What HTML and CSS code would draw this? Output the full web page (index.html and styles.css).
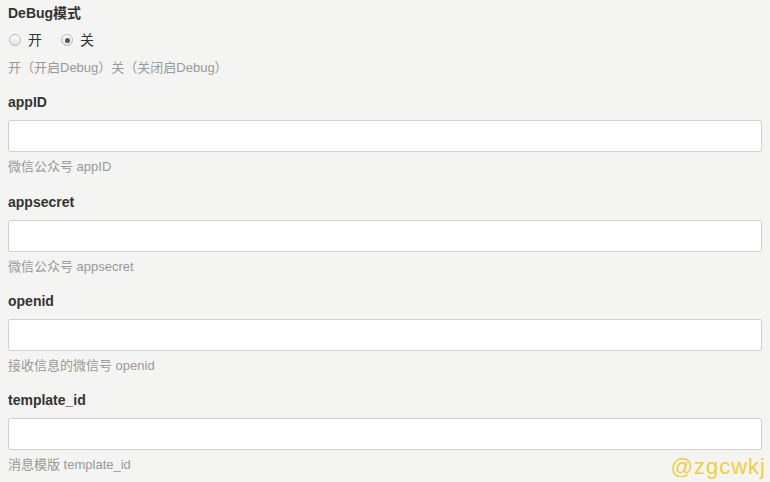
FILE: index.html
```html
<!DOCTYPE html>
<html lang="zh-CN">
<head>
  <meta charset="UTF-8" />
  <title>设置</title>
  <link rel="stylesheet" href="styles.css">
</head>
<body>
  <form class="settings">
    <!-- DeBug -->
    <div class="field field-first">
      <div class="field-label">DeBug模式</div>
      <div class="radio-row">
        <label class="radio"><input type="radio" name="debug" value="1" /> 开</label>
        <label class="radio"><input type="radio" name="debug" value="0" checked /> 关</label>
      </div>
      <p class="help">开（开启Debug）关（关闭启Debug）</p>
    </div>

    <!-- appID -->
    <div class="field">
      <label class="field-label" for="appID">appID</label>
      <input type="text" id="appID" class="text-input" />
      <p class="help">微信公众号 appID</p>
    </div>

    <!-- appsecret -->
    <div class="field">
      <label class="field-label" for="appsecret">appsecret</label>
      <input type="text" id="appsecret" class="text-input" />
      <p class="help">微信公众号 appsecret</p>
    </div>

    <!-- openid -->
    <div class="field">
      <label class="field-label" for="openid">openid</label>
      <input type="text" id="openid" class="text-input" />
      <p class="help">接收信息的微信号 openid</p>
    </div>

    <!-- template_id -->
    <div class="field">
      <label class="field-label" for="templateId">template_id</label>
      <input type="text" id="templateId" class="text-input" />
      <p class="help">消息模版 template_id</p>
    </div>
  </form>

  <div class="watermark">@zgcwkj</div>
</body>
</html>
```

FILE: styles.css
```css
/* Reset & Body */
* {
  margin: 0;
  padding: 0;
  box-sizing: border-box;
}
body {
  font-family: 'Liberation Sans', Arial, 'Noto Sans CJK SC', sans-serif;
  background: #f4f4f2;
  color: #333;
  padding: 3px 8px 0 8px;
  height: 482px;
  overflow: hidden;
}

/* Fields */
.settings {
  display: flex;
  flex-direction: column;
  gap: 15.33px;
}
.field {
  display: flex;
  flex-direction: column;
}
.field-label {
  display: block;
  font-size: 14px;
  font-weight: bold;
  line-height: 20px;
  color: #333;
  margin-bottom: 8px;
}
.field-first .field-label {
  margin-bottom: 7px;
}

/* Radios */
.radio-row {
  display: flex;
  gap: 18px;
  height: 20px;
  align-items: center;
  margin-bottom: 3px;
}
.radio {
  display: flex;
  align-items: center;
  gap: 7px;
  font-size: 14px;
  line-height: 20px;
  color: #333;
  cursor: pointer;
}
.radio input {
  appearance: none;
  width: 12px;
  height: 12px;
  margin-left: 1px;
  border: 1px solid #b9b9b9;
  border-radius: 50%;
  background: linear-gradient(#fdfdfd, #e3e3e3);
  display: grid;
  place-items: center;
}
.radio input:checked::after {
  content: "";
  width: 5px;
  height: 5px;
  border-radius: 50%;
  background: #555;
}

/* Inputs */
.text-input {
  width: 100%;
  height: 32px;
  border: 1px solid #d2d2d2;
  border-radius: 2px;
  background: #fff;
  padding: 0 8px;
  font-size: 14px;
}
.text-input:focus {
  outline: none;
  border-color: #aaa;
}

/* Help text */
.help {
  font-size: 13px;
  line-height: 18px;
  color: #999;
  margin-top: 6px;
}

/* Watermark */
.watermark {
  position: absolute;
  right: 4px;
  bottom: 2px;
  font-size: 22px;
  color: #efd040;
  letter-spacing: 1px;
}
```
